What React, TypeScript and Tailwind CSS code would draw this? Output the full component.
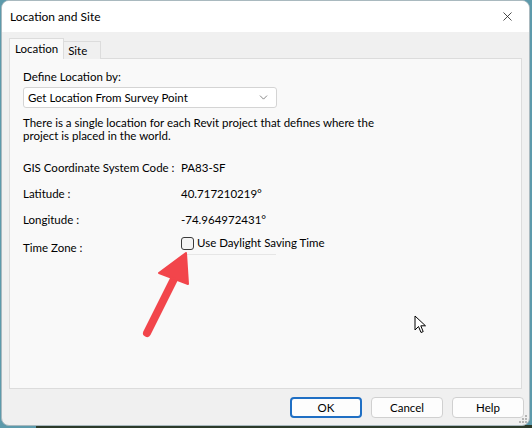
import { X, ChevronDown } from "lucide-react";

const font = { fontFamily: 'Lato, "Noto Sans", sans-serif' };

function Row({ label, value }: { label: string; value: React.ReactNode }) {
  return (
    <div className="flex h-[26px] items-center whitespace-nowrap">
      <span className="w-[158px] shrink-0">{label}</span>
      <span>{value}</span>
    </div>
  );
}

export default function App() {
  return (
    <div
      className="relative h-[428px] w-[532px] overflow-hidden bg-[#5d9aab] text-[11.5px] text-black"
      style={font}
    >
      {/* dark desktop strip below the window */}
      <div className="absolute bottom-0 left-[36px] right-0 h-[3px] bg-[#2c3a2a]" />

      <div className="absolute left-[1px] top-0 flex h-[426px] w-[529px] flex-col overflow-hidden rounded-[8px] border border-[#a9b9bf] bg-[#f0f0f0]">
        {/* Title bar */}
        <div className="flex h-[31px] shrink-0 items-center justify-between bg-white pl-[8px] pr-[14px]">
          <span className="text-[12px] leading-none">Location and Site</span>
          <X className="h-[15px] w-[15px] text-[#222]" strokeWidth={1.3} />
        </div>

        {/* Tabs */}
        <div className="flex flex-1 flex-col px-[7px] pt-[6px]">
          <div className="relative z-10 flex h-[21px] items-end">
            <div className="flex h-[21px] items-center border border-b-0 border-[#dcdcdc] bg-[#f9f9f9] px-[5px] pb-[1px]">
              Location
            </div>
            <div className="flex h-[18px] items-center border border-b-0 border-l-0 border-[#dcdcdc] bg-[#f0f0f0] pl-[4px] pr-[13px]">
              Site
            </div>
          </div>
          <div className="-mt-px h-[331px] border border-[#dcdcdc] bg-[#f9f9f9] px-[13px] pt-[10px]">
            <div className="leading-[16px]">Define Location by:</div>
            <div className="mt-[2px] flex h-[21px] w-[254px] items-center justify-between rounded-[3px] border border-[#d4d4d4] bg-white pl-[4px] pr-[6px]">
              <span>Get Location From Survey Point</span>
              <ChevronDown className="h-[13px] w-[13px] text-[#555]" strokeWidth={1.3} />
            </div>
            <div className="mt-[8px] whitespace-nowrap">
              <div className="h-[13px] leading-[13px]">
                There is a single location for each Revit project that defines where the
              </div>
              <div className="h-[13px] leading-[13px]">project is placed in the world.</div>
            </div>

            <div className="mt-[13px]">
              <Row label="GIS Coordinate System Code :" value="PA83-SF" />
              <Row label="Latitude :" value="40.717210219°" />
              <Row label="Longitude :" value="-74.964972431°" />
              <div className="flex h-[26px] items-center whitespace-nowrap">
                <span className="w-[158px] shrink-0 pt-[4px]">Time Zone :</span>
                <div className="-mt-[6px] flex items-center">
                  <span className="h-[13px] w-[13px] rounded-[3px] border border-[#3a3a3a] bg-[#f4f4f4]" />
                  <span className="ml-[3px]">Use Daylight Saving Time</span>
                </div>
              </div>
              <div className="ml-[163px] -mt-[5px] h-px w-[90px] bg-[#e6e6e6]" />
            </div>
          </div>
        </div>

        {/* Buttons */}
        <div className="flex h-[37px] shrink-0 items-center justify-end gap-[9px] pr-[5px]">
          <button className="h-[21px] w-[72px] rounded-[4px] border-2 border-[#1f6fc4] bg-[#fdfdfd]">OK</button>
          <button className="h-[21px] w-[72px] rounded-[4px] border border-[#d0d0d0] bg-[#fdfdfd]">Cancel</button>
          <button className="h-[21px] w-[72px] rounded-[4px] border border-[#d0d0d0] bg-[#fdfdfd]">Help</button>
        </div>
        {/* size grip */}
        <svg className="absolute bottom-[1px] right-[1px]" width="10" height="10" viewBox="0 0 10 10">
          {[
            [8, 2], [8, 5], [5, 5], [8, 8], [5, 8], [2, 8],
          ].map(([x, y]) => (
            <rect key={`${x}-${y}`} x={x - 1} y={y - 1} width="2" height="2" fill="#b5b5b5" />
          ))}
        </svg>
      </div>

      {/* red annotation arrow */}
      <svg className="absolute left-0 top-0" width="532" height="428" viewBox="0 0 532 428">
        <line x1="147" y1="333" x2="176" y2="275" stroke="#f2454b" strokeWidth="8" strokeLinecap="round" />
        <polygon points="186,253 159,273 188,284" fill="#f2454b" stroke="#f2454b" strokeWidth="2" strokeLinejoin="round" />
      </svg>

      {/* mouse cursor */}
      <svg className="absolute left-[414px] top-[315px]" width="14" height="20" viewBox="0 0 14 20">
        <path d="M1 1 L1 15 L4.5 11.5 L7 17.5 L9.2 16.6 L6.8 10.8 L11.5 10.8 Z" fill="white" stroke="black" strokeWidth="1" strokeLinejoin="round" />
      </svg>
    </div>
  );
}
